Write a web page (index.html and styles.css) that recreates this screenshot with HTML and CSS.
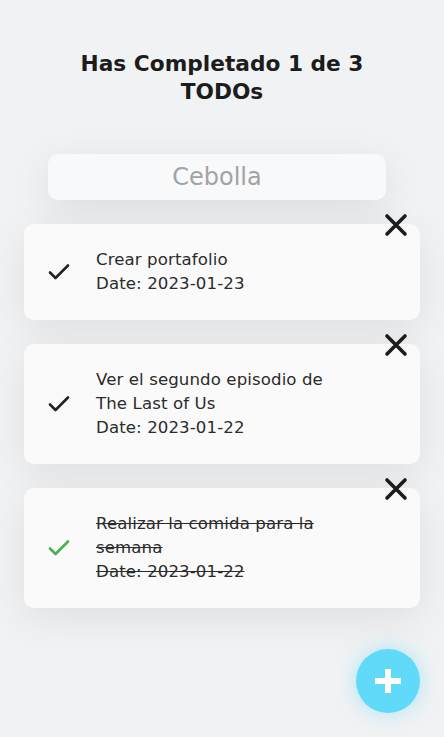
FILE: index.html
```html
<!DOCTYPE html>
<html lang="es">
<head>
<meta charset="utf-8">
<title>TODOs</title>
<link rel="stylesheet" href="styles.css">
</head>
<body>
<main class="app">
  <h1 class="title">Has Completado 1 de 3 TODOs</h1>
  <input class="search" type="text" placeholder="Cebolla">
  <ul class="list">
    <li class="item">
      <span class="check">
        <svg viewBox="0 0 24 24" width="24" height="24"><path d="M2 12.5l5.5 5.5L20 5.5" fill="none" stroke="currentColor" stroke-width="2.6" stroke-linecap="round" stroke-linejoin="round"/></svg>
      </span>
      <p class="text">Crear portafolio<br>Date: 2023-01-23</p>
      <span class="delete">
        <svg viewBox="0 0 24 24" width="24" height="24"><path d="M3 3L21 21M21 3L3 21" fill="none" stroke="currentColor" stroke-width="3.6" stroke-linecap="round"/></svg>
      </span>
    </li>
    <li class="item">
      <span class="check">
        <svg viewBox="0 0 24 24" width="24" height="24"><path d="M2 12.5l5.5 5.5L20 5.5" fill="none" stroke="currentColor" stroke-width="2.6" stroke-linecap="round" stroke-linejoin="round"/></svg>
      </span>
      <p class="text">Ver el segundo episodio de The Last of Us<br>Date: 2023-01-22</p>
      <span class="delete">
        <svg viewBox="0 0 24 24" width="24" height="24"><path d="M3 3L21 21M21 3L3 21" fill="none" stroke="currentColor" stroke-width="3.6" stroke-linecap="round"/></svg>
      </span>
    </li>
    <li class="item">
      <span class="check check--done">
        <svg viewBox="0 0 24 24" width="24" height="24"><path d="M2 12.5l5.5 5.5L20 5.5" fill="none" stroke="currentColor" stroke-width="2.6" stroke-linecap="round" stroke-linejoin="round"/></svg>
      </span>
      <p class="text text--done">Realizar la comida para la semana<br>Date: 2023-01-22</p>
      <span class="delete">
        <svg viewBox="0 0 24 24" width="24" height="24"><path d="M3 3L21 21M21 3L3 21" fill="none" stroke="currentColor" stroke-width="3.6" stroke-linecap="round"/></svg>
      </span>
    </li>
  </ul>
  <button class="fab" type="button" aria-label="Agregar">
    <svg viewBox="0 0 26 24" width="26" height="24"><path d="M10 0h6v9h10v6H16v9h-6v-9H0V9h10z" fill="#ffffff"/></svg>
  </button>
</main>
</body>
</html>
```

FILE: styles.css
```css
* { box-sizing: border-box; }
html, body {
  margin: 0;
  padding: 0;
  height: 100%;
}
body {
  background: #f1f2f4;
  font-family: "DejaVu Sans", "Noto Sans", sans-serif;
  color: #222;
}
.app {
  position: relative;
  min-height: 737px;
  padding-top: 50px;
}
.title {
  margin: 0 auto;
  width: 300px;
  text-align: center;
  font-size: 21.7px;
  line-height: 28px;
  font-weight: 700;
  color: #1c1c1c;
}
.search {
  display: block;
  margin: 48px 0 0 48px;
  width: 338px;
  height: 46px;
  border: none;
  border-radius: 10px;
  background: #f8f9fb;
  box-shadow: 0 10px 40px rgba(0, 0, 0, 0.09);
  font-family: inherit;
  font-size: 24px;
  text-align: center;
  color: #444;
  outline: none;
}
.search::placeholder { color: #a3a3a3; }
.list {
  list-style: none;
  margin: 24px 0 0;
  padding: 0 24px;
  display: flex;
  flex-direction: column;
  gap: 24px;
}
.item {
  position: relative;
  display: flex;
  align-items: center;
  gap: 24px;
  padding: 24px 24px;
  background: #fafafa;
  border-radius: 10px;
  box-shadow: 0 10px 40px rgba(0, 0, 0, 0.08);
}
.check {
  flex: 0 0 24px;
  width: 24px;
  height: 24px;
  color: #222;
  display: flex;
}
.check--done { color: #4caf50; }
.text {
  margin: 0;
  font-size: 16.6px;
  letter-spacing: 0.1px;
  line-height: 24px;
  color: #2b2b2b;
  max-width: 250px;
}
.text--done { text-decoration: line-through; }
.delete {
  position: absolute;
  top: -11px;
  right: 12px;
  width: 24px;
  height: 24px;
  display: flex;
  color: #1c1c1c;
}
.fab {
  position: absolute;
  left: 356px;
  top: 649px;
  width: 64px;
  height: 64px;
  border: none;
  border-radius: 50%;
  background: #61dafa;
  box-shadow: 0 0 20px rgba(97, 218, 250, 0.5);
  display: flex;
  align-items: center;
  justify-content: center;
  padding: 0;
}
```
